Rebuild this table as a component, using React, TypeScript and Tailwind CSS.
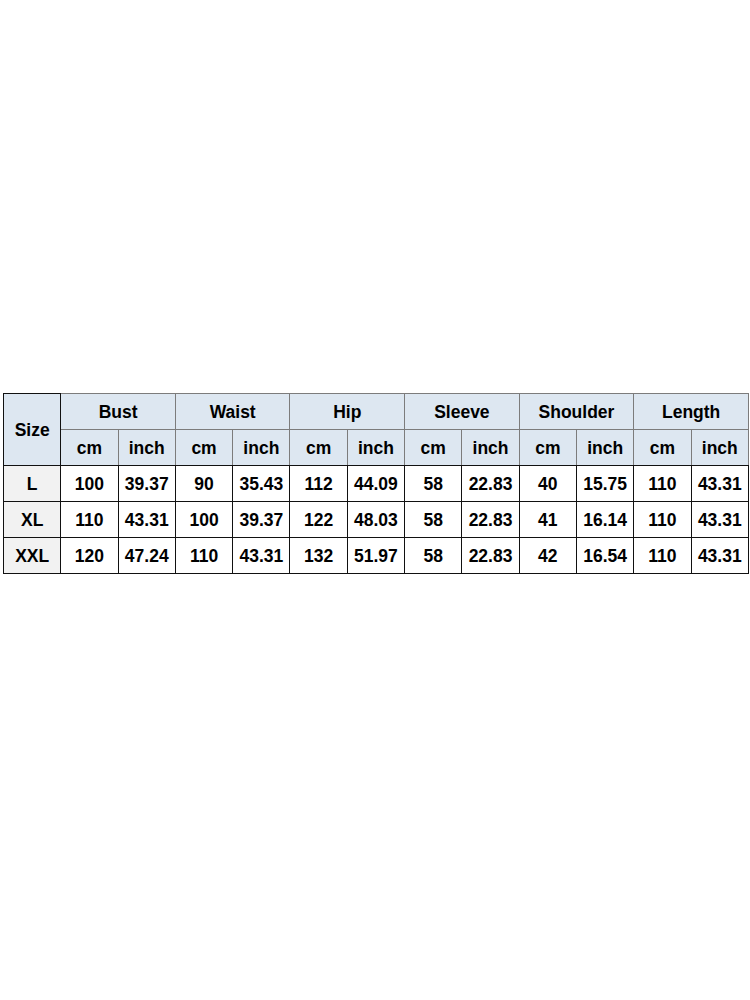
import { Fragment } from "react";

const groups = ["Bust", "Waist", "Hip", "Sleeve", "Shoulder", "Length"];

const rows = [
  ["L", "100", "39.37", "90", "35.43", "112", "44.09", "58", "22.83", "40", "15.75", "110", "43.31"],
  ["XL", "110", "43.31", "100", "39.37", "122", "48.03", "58", "22.83", "41", "16.14", "110", "43.31"],
  ["XXL", "120", "47.24", "110", "43.31", "132", "51.97", "58", "22.83", "42", "16.54", "110", "43.31"],
];

const head = "border border-[#7c7c7c] bg-[#dde7f1] font-bold text-center align-middle pt-[2px]";
const cell = "border border-[#111] font-bold text-center align-middle h-[36px] pt-[2px]";

export default function App() {
  return (
    <div className="w-[750px] h-[1000px] bg-white pt-[393px] pl-[3px] font-['Liberation_Sans',Arial,sans-serif] text-[17.5px] text-black">
      <table className="w-[746px] table-fixed border-collapse border border-[#111]">
        <thead>
          <tr className="h-[36px]">
            <th rowSpan={2} className={head + " border-[#111]"}>
              Size
            </th>
            {groups.map((g) => (
              <th key={g} colSpan={2} className={head}>
                {g}
              </th>
            ))}
          </tr>
          <tr className="h-[36px]">
            {groups.map((g) => (
              <Fragment key={g}>
                <th className={head + " border-b-[#111]"}>cm</th>
                <th className={head + " border-b-[#111]"}>inch</th>
              </Fragment>
            ))}
          </tr>
        </thead>
        <tbody>
          {rows.map((r) => (
            <tr key={r[0]}>
              {r.map((v, i) => (
                <td key={i} className={cell + (i === 0 ? " bg-[#f2f2f2]" : " bg-white")}>
                  {v}
                </td>
              ))}
            </tr>
          ))}
        </tbody>
      </table>
    </div>
  );
}
